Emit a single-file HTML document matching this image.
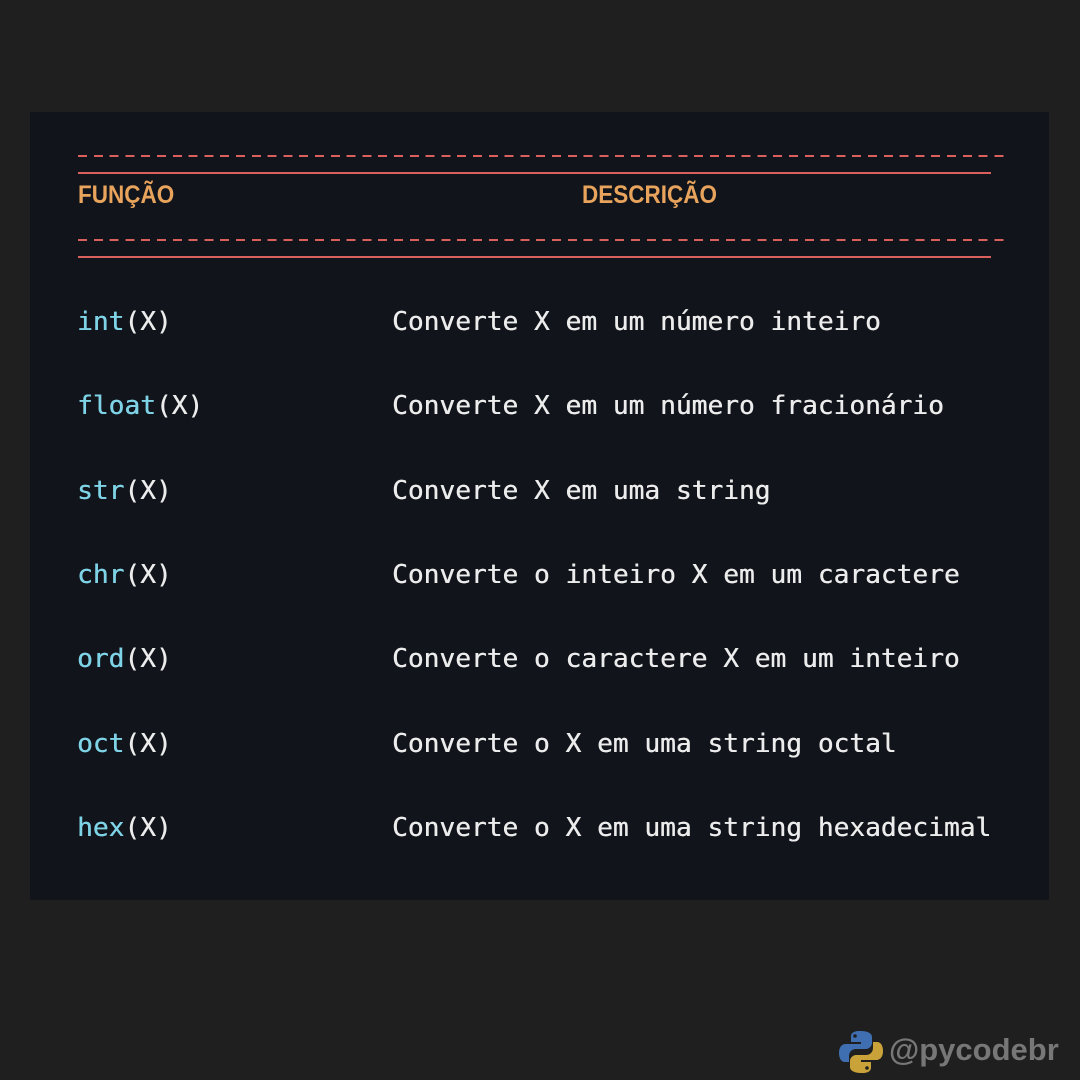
<!DOCTYPE html>
<html><head><meta charset="utf-8"><style>
html,body{margin:0;padding:0;}
body{width:1080px;height:1080px;background:#1f1f1f;position:relative;overflow:hidden;font-family:"DejaVu Sans Mono","Liberation Mono",monospace;}
.panel{position:absolute;left:30px;top:112px;width:1019px;height:788px;background:#11151b;}
.t{position:absolute;font-size:26.2px;line-height:30px;white-space:pre;color:#ececec;text-shadow:0.4px 0 0 currentColor;}
.f{color:#7fd3e6}
.h{color:#e8a35c;font-weight:bold;font-size:25px;font-family:"Liberation Sans","DejaVu Sans",sans-serif;transform:scaleX(0.9);transform-origin:0 0;text-shadow:none;}
.dash{position:absolute;left:78px;width:928px;height:2px;background:repeating-linear-gradient(90deg,#d9605c 0 9px,transparent 9px 15.8px);}
.line{position:absolute;left:78px;width:913px;height:2px;background:#d9605c;}
</style></head><body>
<div class="panel"></div>
<div class="dash" style="top:155px"></div>
<div class="line" style="top:172px"></div>
<div class="t h" style="left:78px;top:180px">FUNÇÃO</div>
<div class="t h" style="left:582px;top:180px">DESCRIÇÃO</div>
<div class="dash" style="top:239px"></div>
<div class="line" style="top:256px"></div>

<div class="t" style="left:77px;top:307px"><span class="f">int</span>(X)</div>
<div class="t" style="left:392px;top:307px">Converte X em um número inteiro</div>
<div class="t" style="left:77px;top:391px"><span class="f">float</span>(X)</div>
<div class="t" style="left:392px;top:391px">Converte X em um número fracionário</div>
<div class="t" style="left:77px;top:476px"><span class="f">str</span>(X)</div>
<div class="t" style="left:392px;top:476px">Converte X em uma string</div>
<div class="t" style="left:77px;top:560px"><span class="f">chr</span>(X)</div>
<div class="t" style="left:392px;top:560px">Converte o inteiro X em um caractere</div>
<div class="t" style="left:77px;top:644px"><span class="f">ord</span>(X)</div>
<div class="t" style="left:392px;top:644px">Converte o caractere X em um inteiro</div>
<div class="t" style="left:77px;top:729px"><span class="f">oct</span>(X)</div>
<div class="t" style="left:392px;top:729px">Converte o X em uma string octal</div>
<div class="t" style="left:77px;top:813px"><span class="f">hex</span>(X)</div>
<div class="t" style="left:392px;top:813px">Converte o X em uma string hexadecimal</div>

<svg style="position:absolute;left:839px;top:1030px" width="44" height="44" viewBox="0 0 44 44">
<path d="M21 1c-9 0-9 4-9 6v5h10v2H7c-5 0-7 4-7 9s2 9 6 9h4v-6c0-4 3-7 7-7h10c3 0 6-3 6-6V7c0-3-3-6-12-6z" fill="#3f6fb0"/>
<circle cx="16" cy="6" r="1.8" fill="#1f1f1f"/>
<path d="M23 43c9 0 9-4 9-6v-5H22v-2h15c5 0 7-4 7-9s-2-9-6-9h-4v6c0 4-3 7-7 7H17c-3 0-6 3-6 6v6c0 3 3 6 12 6z" fill="#c9a33a"/>
<circle cx="28" cy="38" r="1.8" fill="#1f1f1f"/>
</svg>
<div style="position:absolute;left:889px;top:1032px;font-family:'Liberation Sans',sans-serif;font-weight:bold;font-size:31px;color:#777;line-height:36px">@pycodebr</div>
</body></html>
